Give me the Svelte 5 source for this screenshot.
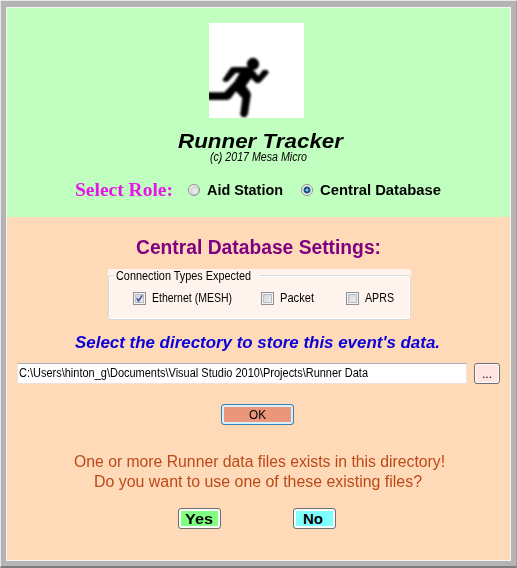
<script>
  let role = $state('central');
  let connections = $state([
    { name: 'Ethernet (MESH)', width: 80, on: true },
    { name: 'Packet', width: 34, on: false },
    { name: 'APRS', width: 29, on: false }
  ]);

  // Stretches a label horizontally so its glyphs fill the given width.
  function fit(node, width) {
    const natural = node.getBoundingClientRect().width;
    if (natural) node.style.transform = `scaleX(${width / natural})`;
  }
</script>

{#snippet label(text, width)}
  <span class="label" style="width:{width}px"><span class="ink" use:fit={width}>{text}</span></span>
{/snippet}

<main class="window">
  <div class="form">
    <header>
      <svg class="logo" viewBox="27 24 285 285">
        <rect x="27" y="24" width="285" height="285" fill="#fff" />
        <g class="runner">
          <circle cx="159" cy="147" r="18.5" />
          <path d="M98 156H142L164 169L175 183L188 166Q204 160 206 174L182 201Q172 209 162 199L154 190L137 213L149 229Q155 238 151 249L144 296Q140 308 129 307Q119 303 121 294L127 250L108 229L93 249Q88 255 80 255H22V232H73L103 200L119 174H107L85 198Q75 205 67 195L88 164Q92 157 98 156Z" />
        </g>
      </svg>
      <h1>{@render label('Runner Tracker', 165)}</h1>
      <p class="copy">{@render label('(c) 2017 Mesa Micro', 97)}</p>
      <div class="roles">
        <span class="prompt">{@render label('Select Role:', 98)}</span>
        <button class="option first" onclick={() => (role = 'aid')}>
          <i class="radio" class:on={role === 'aid'}></i>{@render label('Aid Station', 76)}
        </button>
        <button class="option" onclick={() => (role = 'central')}>
          <i class="radio" class:on={role === 'central'}></i>{@render label('Central Database', 121)}
        </button>
      </div>
    </header>

    <section>
      <h2>{@render label('Central Database Settings:', 245)}</h2>
      <div class="group">
        <div class="legend">{@render label('Connection Types Expected', 135)}</div>
        <div class="checks">
          {#each connections as c}
            <button class="check" onclick={() => (c.on = !c.on)}>
              <i class="box">
                {#if c.on}
                  <svg viewBox="0 0 13 13"><path d="M3.3 6.2L5.4 9.4L9.7 2.8" fill="none" stroke="#455c9c" stroke-width="2" /></svg>
                {/if}
              </i>{@render label(c.name, c.width)}
            </button>
          {/each}
        </div>
      </div>
      <p class="hint">{@render label("Select the directory to store this event's data.", 365)}</p>
      <div class="path-row">
        <div class="path">{@render label('C:\\Users\\hinton_g\\Documents\\Visual Studio 2010\\Projects\\Runner Data', 349)}</div>
        <button class="btn browse">...</button>
      </div>
      <button class="btn ok">{@render label('OK', 17)}</button>
      <p class="warn">{@render label('One or more Runner data files exists in this directory!', 371)}</p>
      <p class="warn">{@render label('Do you want to use one of these existing files?', 328)}</p>
      <div class="answers">
        <button class="btn yes">{@render label('Yes', 28)}</button>
        <button class="btn no">{@render label('No', 20)}</button>
      </div>
    </section>
  </div>
</main>

<style>
  :global(body) { margin: 0; }
  * { box-sizing: border-box; }
  h1, h2, p { margin: 0; font-weight: normal; }
  button { margin: 0; padding: 0; border: 0; background: none; font: inherit; color: inherit; }
  .window {
    width: 517px; height: 568px; padding: 6px 5px 5px 5px;
    border: 1px solid; border-color: #e8e8e8 #a0a0a0 #7c7c7c #e8e8e8;
    border-width: 1px 1px 2px 1px;
    background: #b4b4b4; font-family: "Liberation Sans", Arial, sans-serif;
    font-size: 12px; color: #000;
  }
  .form { width: 505px; height: 554px; border: 1px solid #f4f4f4; background: #ffdab9; }
  .label { display: inline-block; flex: none; white-space: nowrap; text-align: left; }
  .ink { display: inline-block; transform-origin: 0 50%; }
  header { height: 209px; padding-top: 15px; background: #c0ffc0; }
  .logo { display: block; width: 95px; height: 95px; margin-left: 202px; }
  .runner { filter: blur(2.6px); }
  h1 { height: 20px; margin: 13px 0 0 171px; font: italic bold 21px/20px "Liberation Sans", Arial, sans-serif; }
  .copy { height: 12px; margin: 0 0 0 203px; font-style: italic; line-height: 12px; }
  .roles { display: flex; align-items: center; height: 22px; margin: 16px 0 0 68px; }
  .prompt { font: bold 19px/22px "Liberation Serif", "Times New Roman", serif; color: #e815e8; }
  .option { display: flex; align-items: center; gap: 7px; margin-left: 18px; font-weight: bold; font-size: 14px; line-height: 20px; }
  .option.first { margin-left: 15px; }
  .radio {
    width: 12px; height: 12px; border: 1px solid #8e8f8f; border-radius: 50%;
    background: radial-gradient(circle at 60% 60%, #f0f0f0 10%, #cfd2d6 50%, #f4f4f4 65%);
  }
  .radio.on { background: radial-gradient(circle at 50% 50%, #7cc6e8 0 1px, #17507e 2px 3px, #f4f4f4 4px); }
  section { height: 343px; padding-top: 17px; }
  h2 { height: 26px; margin-left: 129px; font: bold 20px/26px "Liberation Sans", Arial, sans-serif; color: #800080; }
  .group { position: relative; width: 303px; height: 50px; margin: 9px 0 0 101px; background: #fff3ed; }
  .group::before {
    content: ""; position: absolute; inset: 6px 0 0 0; border: 1px solid #d5dadd; border-radius: 3px;
    box-shadow: inset 0 0 0 1px #fff; height: 43px;
  }
  .legend { position: relative; width: 145px; height: 14px; margin-left: 6px; padding-left: 2px; line-height: 14px; background: #fff3ed; }
  .checks { position: relative; display: flex; gap: 29px; padding: 7px 0 0 25px; }
  .check { display: flex; align-items: center; gap: 6px; height: 16px; line-height: 16px; }
  .check:last-child { margin-left: 3px; }
  .box {
    width: 13px; height: 13px; border: 1px solid #8e8f8f; box-shadow: inset 0 0 0 1px #f4f4f4, inset 0 0 0 2px #b8bdc2;
    background: linear-gradient(135deg, #c8ccd2, #f8f8f8);
  }
  .box svg { display: block; width: 11px; height: 11px; }
  .hint { height: 22px; margin: 13px 0 0 68px; font: italic bold 17px/22px "Liberation Sans", Arial, sans-serif; color: #0a00d8; }
  .path-row { display: flex; align-items: center; gap: 7px; margin: 9px 0 0 10px; }
  .path {
    width: 450px; height: 21px; padding-left: 1px; line-height: 18px; background: #fff;
    border: 1px solid; border-color: #abadb3 #f0e2d8 #f0e2d8 #f0e2d8;
  }
  .btn {
    display: flex; justify-content: center; align-items: center; line-height: 16px;
    border: 1px solid #707070; border-radius: 3px; box-shadow: inset 0 0 0 2px #fbfbfb;
  }
  .browse { width: 26px; height: 21px; background: #ffe4e1; box-shadow: inset 0 0 0 1px #fbfbfb; }
  .ok { width: 73px; height: 21px; margin: 20px 0 0 214px; border-color: #3c7fb1; background: #e9967a; box-shadow: inset 0 0 0 2px #d3f2fb; }
  .warn { height: 20px; margin-left: 67px; font-size: 16px; line-height: 20px; color: #bd4817; }
  .ok + .warn { margin-top: 27px; }
  .warn + .warn { margin-left: 87px; }
  .answers { display: flex; gap: 72px; margin: 16px 0 0 171px; font-weight: bold; font-size: 15px; }
  .yes, .no { width: 43px; height: 21px; }
  .yes { background: #80ff80; padding-right: 2px; }
  .no { background: #80ffff; padding-right: 3px; }
</style>
